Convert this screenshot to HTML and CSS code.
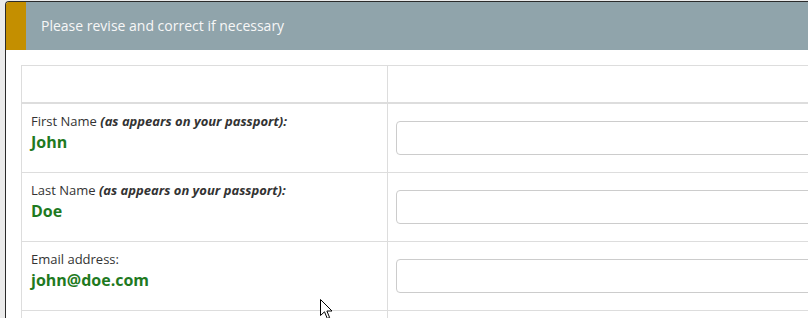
FILE: index.html
```html
<!DOCTYPE html>
<html>

<head>
    <title>Revise details</title>
    <link rel="stylesheet" href="styles.css">
</head>

<body>
    <div class="window">
        <div class="panel-heading">
            <span class="stripe"></span>
            <span class="heading-text">Please revise and correct if necessary</span>
        </div>

        <div class="panel-body">
            <table class="details">
                <thead>
                    <tr>
                        <th class="col-label"></th>
                        <th></th>
                    </tr>
                </thead>
                <tbody>
                    <tr>
                        <td class="label-cell">
                            <div class="field-label">First Name <em>(as appears on your passport):</em></div>
                            <div class="field-value">John</div>
                        </td>
                        <td><input type="text" class="form-control"></td>
                    </tr>
                    <tr>
                        <td class="label-cell">
                            <div class="field-label">Last Name <em>(as appears on your passport):</em></div>
                            <div class="field-value">Doe</div>
                        </td>
                        <td><input type="text" class="form-control"></td>
                    </tr>
                    <tr>
                        <td class="label-cell">
                            <div class="field-label">Email address:</div>
                            <div class="field-value">john@doe.com</div>
                        </td>
                        <td><input type="text" class="form-control"></td>
                    </tr>
                    <tr>
                        <td class="label-cell"></td>
                        <td></td>
                    </tr>
                </tbody>
            </table>
        </div>
    </div>

    <!-- mouse pointer sitting over the page -->
    <svg class="cursor" width="14" height="21" viewBox="0 0 14 21">
        <path d="M0.5 0.5 L0.5 16.5 L4.5 12.8 L7.3 19.5 L9.6 18.5 L6.9 12 L12 12 Z" fill="#fff" stroke="#000"
            stroke-width="1" stroke-linejoin="miter" />
    </svg>
</body>

</html>
```

FILE: styles.css
```css
body {
    margin: 0;
    background-color: #ebebeb;
    font-family: "Open Sans", Arial, sans-serif;
    overflow: hidden;
    height: 318px;
    position: relative;
}

.window {
    margin: 1px 0 0 5px;
    width: 1000px;
    height: 400px;
    background-color: #fff;
    border: 1px solid #2b2b2b;
    border-right: none;
    border-radius: 4px 0 0 0;
    overflow: hidden;
}

.panel-heading {
    display: flex;
    height: 48px;
    background-color: #90a4ab;
}

.stripe {
    width: 20px;
    background-color: #c48f00;
}

.heading-text {
    padding-left: 15px;
    font-size: 14px;
    line-height: 48px;
    color: #f7f7f7;
}

.panel-body {
    padding: 15px 0 0 15px;
}

.details {
    width: 100%;
    border-collapse: collapse;
    border: 1px solid #ddd;
}

.details th {
    height: 36px;
    padding: 0;
    border: 1px solid #ddd;
    border-bottom-width: 2px;
}

.details .col-label {
    width: 365px;
}

.details td {
    height: 52px;
    padding: 8px 8px 8px 9px;
    border: 1px solid #ddd;
    vertical-align: middle;
}

.details .label-cell {
    vertical-align: top;
}

.field-label {
    font-size: 13px;
    line-height: 18px;
    color: #333;
}

.field-label em {
    font-weight: bold;
}

.field-value {
    margin-top: 1px;
    font-size: 16px;
    font-weight: bold;
    line-height: 22px;
    color: #1f7a1f;
}

.form-control {
    display: block;
    box-sizing: border-box;
    width: 100%;
    height: 34px;
    margin-left: -1px;
    border: 1px solid #ccc;
    border-radius: 4px;
    background-color: #fff;
}

.cursor {
    position: absolute;
    left: 320px;
    top: 299px;
}
```
